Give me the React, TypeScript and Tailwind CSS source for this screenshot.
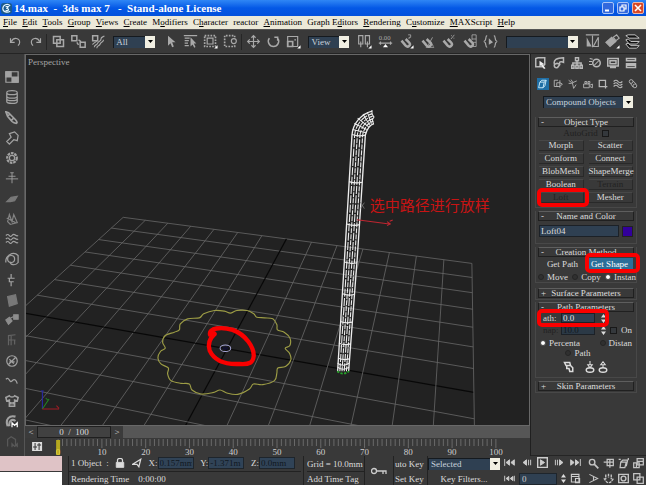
import React from "react";

type IconProps = { children: React.ReactNode; className?: string; vb?: string };

function Icon({ children, className = "size-4", vb = "0 0 16 16" }: IconProps) {
  return (
    <svg viewBox={vb} className={className} fill="none" stroke="currentColor" strokeWidth="1.4" aria-hidden="true">
      {children}
    </svg>
  );
}

function Tool({ label, children, corner }: { label: string; children: React.ReactNode; corner?: boolean }) {
  return (
    <button aria-label={label} className="flex h-5 w-5 shrink-0 items-center justify-center text-[#a9a9a9]">
      <Icon className="size-[15px]" vb="-1 -1 18 18">
        {children}
        {corner && <path d="M16.5 12.5v4h-4z" fill="#fff" stroke="none" />}
      </Icon>
    </button>
  );
}

function Select({ label, value, className }: { label: string; value: string; className: string }) {
  return (
    <span className={"relative flex h-3 shrink-0 " + className}>
      <select
        aria-label={label}
        className="h-full w-full appearance-none border-l border-t border-[#151a1f] bg-[#2f4052] pl-[2px] leading-none text-[#c9d3dc] outline-none"
      >
        <option>{value}</option>
      </select>
      <span className="pointer-events-none absolute inset-y-0 right-0 flex w-[10px] items-center justify-center bg-[#f1efe2]">
        <svg viewBox="0 0 5 3" className="h-[3px] w-[5px]" aria-hidden="true">
          <path d="M0 0h5L2.5 3z" fill="#000" />
        </svg>
      </span>
    </span>
  );
}

const Sep = () => <span className="mx-px h-4 w-px shrink-0 bg-[#262626]" />;

const menus: [string, number][] = [
  ["File", 0], ["Edit", 0], ["Tools", 0], ["Group", 0], ["Views", 0], ["Create", 0], ["Modifiers", 1],
  ["Character", 1], ["reactor", -1], ["Animation", 0], ["Graph Editors", 7], ["Rendering", 0],
  ["Customize", 1], ["MAXScript", 0], ["Help", 0],
];

function TitleBar() {
  return (
    <header className="flex h-4 items-center bg-gradient-to-b from-[#2f86f5] via-[#0458e6] to-[#0351dc] pl-px pr-[2px] text-white">
      <svg viewBox="0 0 12 12" className="size-[11px]" aria-hidden="true">
        <rect width="12" height="12" rx="3" fill="#1b5a8c" />
        <path d="M10 3C7 0 2 2 2 6s5 5 8 3M5 4h3L6.500 6C9 6 9 9 5 8" fill="none" stroke="#e4f4ff" strokeWidth="1.300" />
      </svg>
      <h1 className="ml-[2px] whitespace-pre text-[11px] font-bold leading-4">14.max  -  3ds max 7   -  Stand-alone License</h1>
      <div className="ml-auto flex gap-[3px]">
        <button aria-label="Minimize" className="size-3 rounded-[2px] border border-[#a9c4f7] bg-[#3268dd]">
          <Icon className="size-full" vb="0 0 10 10"><path d="M2 7.500h4" strokeWidth="2" /></Icon>
        </button>
        <button aria-label="Restore" className="size-3 rounded-[2px] border border-[#a9c4f7] bg-[#3268dd]">
          <Icon className="size-full" vb="0 0 10 10"><path d="M4 4V2h4v4H6M2 4h4v4H2z" strokeWidth="1.200" /></Icon>
        </button>
        <button aria-label="Close" className="size-3 rounded-[2px] border border-[#f0b8a8] bg-[#d94826]">
          <Icon className="size-full" vb="0 0 10 10"><path d="M2 2l6 6M8 2L2 8" strokeWidth="1.600" /></Icon>
        </button>
      </div>
    </header>
  );
}

function MenuBar() {
  return (
    <nav className="h-[13px] bg-[#ece9d8] px-[3px] text-black">
      <div className="flex w-4/5 justify-between">
        {menus.map(([m, u]) => (
          <button key={m} className="whitespace-nowrap leading-[13px]">
            {u < 0 ? m : <>{m.slice(0, u)}<u>{m[u]}</u>{m.slice(u + 1)}</>}
          </button>
        ))}
      </div>
    </nav>
  );
}

const magnet = <path d="M2 7l5 6c3 3 7-1 4-4L7 5" strokeWidth="3" />;

function Toolbar() {
  return (
    <div className="flex h-6 items-center justify-between border-t border-[#555] pl-[5px] pr-[3px]">
      <div className="flex items-center">
        <Tool label="Undo"><path d="M2 4v5h5M3 8c3-6 10-4 10 1 0 2-1 3-2 4" /></Tool>
        <Tool label="Redo"><path d="M14 4v5H9M13 8C10 2 3 4 3 9c0 2 1 3 2 4" /></Tool>
        <Sep />
        <Tool label="Select and link"><path d="M2 2h8v8H2zM6 6h8v8H6z" strokeWidth="1.800" /></Tool>
        <Tool label="Unlink selection"><path d="M0 1h6v6H0zM10 9h6v6h-6zM8 6l3 2M6 9l2 3" strokeWidth="1.800" /></Tool>
        <Tool label="Bind to space warp"><path d="M1 1h6v6H1z" strokeWidth="1.800" /><path d="M3 15c0-4 3-2 4-5s4-2 4-5 3-2 4-4M6 16c0-4 3-2 4-5s4-2 4-5M1 12c0-3 4-2 5-5" /></Tool>
      </div>
      <Select label="Selection filter" value="All" className="w-[42px]" />
      <div className="flex items-center">
        <Tool label="Select object"><path d="M5 1v12l3-3 2 5 2-1-2-5h4z" fill="currentColor" stroke="none" /></Tool>
        <Tool label="Select by name"><path d="M0 1h16M1 4h6M1 7h5M1 10h4M1 13h5" /><path d="M8 3v11l2.500-2.500 2 4 1.500-1-2-4H15z" fill="currentColor" stroke="none" /></Tool>
        <Tool label="Selection region" corner><path d="M1 1h13v13H1z" strokeDasharray="2 1.500" strokeWidth="2" /><path d="M4 4h7v7H4z" /></Tool>
        <Tool label="Window crossing"><path d="M13 3V1H1v13h12v-2" strokeDasharray="2 1.500" strokeWidth="2" /><circle cx="12" cy="7.500" r="3" /></Tool>
        <Sep />
        <Tool label="Move"><path d="M8 1v14M1 8h14M5.500 3.500L8 1l2.500 2.500M5.500 12.500L8 15l2.500-2.500M3.500 5.500L1 8l2.500 2.500M12.500 5.500L15 8l-2.500 2.500" /></Tool>
        <Tool label="Rotate"><path d="M3 4c-3 4 0 10 5 10s8-6 5-10M13 7V3h-4" strokeWidth="1.800" /></Tool>
        <Tool label="Scale" corner><path d="M1 2h12v12H1z" /><path d="M1 8h6v6H1z" strokeWidth="2" /><path d="M9 6h2" /></Tool>
      </div>
      <Select label="Reference coordinates" value="View" className="w-[41px]" />
      <div className="flex items-center gap-px">
        <Tool label="Pivot centre" corner><path d="M1 1h5v10H1zM9 1h5v10H9zM3.500 8v7M11.500 8v7" /></Tool>
        <Tool label="Keyboard override"><text x="0" y="6" fontSize="8" fill="currentColor" stroke="none">0.00</text><path d="M0 10h16M2 8v4M14 8v4" /><path d="M8 11l3 4H5z" fill="#fff" stroke="none" /></Tool>
        <Tool label="Snap toggle" corner>{magnet}<path d="M10 0h3v3h-2v2" strokeWidth="1" /></Tool>
        <Tool label="Angle snap">{magnet}<path d="M6 15h10M9 12l5-9M12 8l3 6" strokeWidth="1" /></Tool>
        <Tool label="Percent snap">{magnet}<path d="M11 5l4-5M11 1h1M14 4h1" strokeWidth="1" /></Tool>
        <Tool label="Spinner snap">{magnet}<path d="M11 0h5v14h-4M11 5h5M11 9h5M11 0v6" strokeWidth="1" /></Tool>
        <Tool label="Named selection sets"><path d="M4 1C1 1 4 7 0 8c4 1 1 7 4 7M12 1c3 0 0 6 4 7-4 1-1 7-4 7" /><path d="M6 4v8l5-3z" fill="currentColor" stroke="none" /></Tool>
      </div>
      <Select label="Named selection" value="" className="w-[72px]" />
      <div className="flex items-center">
        <Tool label="Mirror"><path d="M8 1v14M0 0h16" /><path d="M1 3l6 11H1z" fill="currentColor" stroke="none" /><path d="M15 3L9 14h6z" /></Tool>
        <Tool label="Align" corner><path d="M0 9l7-6 5 5-7 6z" fill="currentColor" /><path d="M9 3l4-3 3 4-4 3z" /></Tool>
        <Tool label="Layers"><g stroke="#ddd" fill="#111" strokeWidth="1"><path d="M0 11l3-1 3 3h10l-3 3H4z" /><path d="M0 6l3-1 3 3h10l-3 3H4z" /><path d="M0 1l3-1h8l5 4H4z" /></g></Tool>
      </div>
    </div>
  );
}

const sideIcons: [string, React.ReactNode][] = [
  ["Rigid bodies", <><path d="M1 2h14v12H1z" /><path d="M1 2h6v6H1zM8 8h7v6H8z" fill="currentColor" /></>],
  ["Cloth", <path d="M2 3c0-3 12-3 12 0v10c0 3-12 3-12 0zM2 3c0 3 12 3 12 0M2 7c0 3 12 3 12 0M2 10c0 3 12 3 12 0" />],
  ["Soft bodies", <path d="M1 1l3 1 8 8c2 2 2 4 1 4s-3 0-5-2L3 6zM5 4L3 6M10 8l-3 3" strokeWidth="2" />],
  ["Rope", <path d="M5 3l6-2 4 4-1 6-4-1-5 5-3-3 5-5z" />],
  ["Deforming mesh", <><circle cx="8" cy="8" r="5.500" strokeWidth="2.500" strokeDasharray="3 1" /><circle cx="8" cy="8" r="3" /></>],
  ["Plane", <path d="M8 2v12M1 9h14M4 6h8M6 2h4" strokeWidth="1" />],
  ["Spring", <path d="M2 11l5-5 7-1-3 5-5 1z" fill="currentColor" opacity=".6" />],
  ["Dashpot", <path d="M3 11l2-8 3 8 2-8 4 9-8 2zM2 7l10 5" opacity=".7" />],
  ["Motor", <path d="M1 4c4-4 4 4 7 0s4 2 7 0M1 8c4-4 4 4 7 0s4 2 7 0M1 12c4-4 4 4 7 0s4 2 7 0" />],
  ["Wind", <><circle cx="7" cy="8" r="4" /><path d="M1 12C0 5 9-2 15 4v8c-3 4-9 3-9-1" /></>],
  ["Toy car", <path d="M7 1v5M3 6h8M5 6v4h5M7 10v5" />],
  ["Fracture", <path d="M3 4l9-2 2 10-9 3z" fill="currentColor" opacity=".6" />],
  ["Water", <path d="M1 8l4-3 3 4-4 4zM10 2h5v5h-5zM6 6l4-2" fill="currentColor" opacity=".8" />],
  ["Hinge", <path d="M4 14V3l8-1M4 8h8M7 3v11M11 8v5" opacity=".4" />],
  ["Point-point", <><circle cx="8" cy="8" r="6" /><path d="M4 12l8-8M5 6l5 5M5 9h6" /></>],
  ["Prismatic", <path d="M1 6c4-4 4 5 7 2s5-1 6 3" />],
  ["Cloth modifier", <path d="M1 4l4-2c1 2 5 2 6 0l4 2-1 4-3-1v7H5V7L2 8zM6 9v3M8 9v3M10 9v3" strokeWidth="1.800" />],
  ["Rope modifier", <><path d="M3 14C0 6 5 1 12 3M5 14C4 8 8 5 12 8" strokeWidth="2.400" /><path d="M8 15v-5l3 3 3-3v5" stroke="#fff" /></>],
  ["Analyze world", <path d="M3 13V5l4-3 5 3v8M8 14v-4l3 3 3-3v4" opacity=".3" />],
];

function SideBar() {
  return (
    <aside className="flex w-[25px] shrink-0 flex-col items-center justify-between border-r border-[#555] py-[15px] pb-[6px] text-[#a2a2a2]">
      {sideIcons.map(([n, i]) => (
        <button key={n} aria-label={n} className="flex h-4 w-5 items-center justify-center">
          <Icon className="size-[14px]">{i}</Icon>
        </button>
      ))}
    </aside>
  );
}

/* Projects ground-plane coordinates (14 cells wide, 7 cells deep per unit) into the perspective view. */
const quad = { a: [124, 217], b: [472, 263], c: [474, 391.7], d: [19.6, 311.6] };
function project(col: number, row: number): [number, number] {
  const u = col / 14;
  const v = row / 7;
  const [x0, y0] = quad.a, [x1, y1] = quad.b, [x2, y2] = quad.c, [x3, y3] = quad.d;
  const dx1 = x1 - x2, dx2 = x3 - x2, dx3 = x0 - x1 + x2 - x3;
  const dy1 = y1 - y2, dy2 = y3 - y2, dy3 = y0 - y1 + y2 - y3;
  const det = dx1 * dy2 - dx2 * dy1;
  const g = (dx3 * dy2 - dx2 * dy3) / det;
  const h = (dx1 * dy3 - dx3 * dy1) / det;
  const w = g * u + h * v + 1;
  return [
    ((x1 - x0 + g * x1) * u + (x3 - x0 + h * x3) * v + x0) / w,
    ((y1 - y0 + g * y1) * u + (y3 - y0 + h * y3) * v + y0) / w,
  ];
}

/* Closed Catmull-Rom spline through the given knots. */
function spline(p: number[][]) {
  const n = p.length;
  return `M${p[0]}` + p.map((a, i) => {
    const z = p[(i + n - 1) % n], b = p[(i + 1) % n], c = p[(i + 2) % n];
    return `C${a[0] + (b[0] - z[0]) / 6} ${a[1] + (b[1] - z[1]) / 6} ${b[0] - (c[0] - a[0]) / 6} ${b[1] - (c[1] - a[1]) / 6} ${b[0]} ${b[1]}`;
  }).join("") + "Z";
}

const steps = Array.from({ length: 15 }, (_, i) => i);
const flower = [
  [243, 38], [262, 30], [293, 30], [313, 40], [322, 50], [345, 52], [370, 55], [382, 72], [384, 88], [404, 95],
  [421, 112], [421, 135], [407, 143], [420, 158], [424, 178], [408, 198], [385, 202], [382, 218], [375, 240],
  [340, 252], [312, 250], [300, 265], [265, 281], [232, 277], [212, 268], [190, 276], [155, 280], [128, 268],
  [120, 250], [95, 248], [65, 240], [55, 220], [57, 202], [35, 190], [26, 172], [34, 152], [48, 143], [40, 125],
  [48, 105], [75, 95], [90, 88], [93, 70], [115, 55], [150, 52], [163, 40], [195, 30], [225, 32],
];

function GridLine({ from, to, axis }: { from: [number, number]; to: [number, number]; axis: boolean }) {
  return <line x1={from[0]} y1={from[1]} x2={to[0]} y2={to[1]} stroke={axis ? "#080808" : "#686868"} strokeWidth={axis ? 1.2 : 0.8} />;
}

function Viewport() {
  const rings = [[135, 157, 197], [276, 148, 188], [403, 141, 181], [517, 135, 172], [612, 129, 163], [695, 122, 157], [760, 118, 153], [805, 116, 149]];
  return (
    <div className="border border-[#686868] bg-[#222]">
      <svg viewBox="27 55 502 369" className="block w-full" role="img" aria-label="Perspective viewport">
        {steps.map((i) => (
          <React.Fragment key={i}>
            <GridLine from={project(i, 0)} to={project(i, 11)} axis={i === 7} />
            {i < 12 && <GridLine from={project(0, i)} to={project(14, i)} axis={i === 7} />}
          </React.Fragment>
        ))}
        <text x="29" y="65" fontSize="9" fill="#a5a5a5">Perspective</text>
        <g transform="translate(150 300) scale(.3333)" fill="none">
          <path stroke="#9c9c45" strokeWidth="3.500" d={spline(flower)} />
          <path
            stroke="#f90000"
            strokeWidth="13"
            strokeLinecap="round"
            strokeLinejoin="round"
            d="M196 100L182 103C178 82 215 78 250 88C290 103 313 140 313 165C311 187 300 192 270 190C225 192 195 180 181 150C174 130 183 112 196 100"
          />
          <ellipse cx="228" cy="143" rx="16" ry="10" stroke="#a8a8d8" strokeWidth="3" />
          <ellipse cx="228" cy="143" rx="9" ry="5" fill="#11112e" />
        </g>
        <g transform="translate(26 200) scale(.3333)" fill="none" strokeWidth="3">
          <path d="M52 625v-52M47 571h9" stroke="#2929b0" />
          <path d="M52 625l20-30M62 592l6 6" stroke="#228a22" />
          <path d="M52 625h50M94 615l8 8" stroke="#a01c24" />
        </g>
        <g transform="translate(300 90) scale(.3333)" fill="none" stroke="#ededed">
          {[0, 1, 2, 3, 4, 5].map((i) => (
            <path
              key={i}
              strokeWidth={i === 0 || i === 5 ? 4 : 3.2}
              strokeDasharray={i === 0 || i === 5 ? undefined : i % 2 ? "24 4" : "15 3"}
              d={`M${114 + i * 6.6} 842L${135 + i * 7.6} 500L${157 + i * 8} 135C${160 + i * 8} ${98 + i * 5} ${185 + i * 4} ${72 + i * 7} ${217 + i} ${63 + i * 7.5}`}
            />
          ))}
          {rings.map(([y, l, r]) => (
            <path key={y} strokeWidth="3.500" d={`M${l} ${y - 2}Q${(l + r) / 2} ${y + 5} ${r} ${y}`} />
          ))}
          <path strokeWidth="3" d="M159 118l40 10M164 100l37 18M174 84l33 26M190 72l20 33M203 66l12 35M217 60v12l6 9-5 8 4 14" />
          <path strokeWidth="3" d="M114 830q16 12 34 0M114 818q16 12 34 0" />
          <path stroke="#29a32b" strokeWidth="5" strokeDasharray="7 4" d="M113 842q17 14 35 0" />
          <path stroke="#bf2631" strokeWidth="3" d="M172 388l97 13M262 394l10 7-10 5M270 393l9-4" />
          <path stroke="#777" strokeWidth="2.500" d="M182 335l12 20M194 337l-11 17" />
        </g>
        <text x="370" y="211" fontSize="15" fill="#c81414" className="font-['Noto_Sans_CJK_SC',sans-serif]">选中路径进行放样</text>
      </svg>
    </div>
  );
}

function TimeControls() {
  return (
    <>
      <div className="flex h-3 bg-[#565656]">
        <div className="flex w-[98px] items-stretch bg-[#3b3b3b] text-[#ddd]">
          <button aria-label="Previous frame" className="w-3 leading-3">&lt;</button>
          <span className="flex-1 border border-[#1f1f1f] bg-[#414141] text-center leading-[10px]">0&nbsp; / &nbsp;100</span>
          <button aria-label="Next frame" className="w-3 leading-3">&gt;</button>
        </div>
      </div>
      <svg viewBox="26 436 504 18" className="block w-full" role="img" aria-label="Track bar">
        <path d="M33 440h10v9H33z" fill="#ddd" />
        <path d="M36 441v7M40 441v7M34 445h4M38 443h4" stroke="#333" />
        {Array.from({ length: 101 }, (_, i) => (
          <line key={i} x1={59 + i * 4.37} x2={59 + i * 4.37} y1="437" y2={i % 10 ? 444 : 446} stroke="#6a6a6a" />
        ))}
        <rect x="57" y="438" width="4" height="15" fill="#b5a91f" />
        {Array.from({ length: 11 }, (_, i) => (
          <text key={i} x={59 + i * 43.7} y="453" fontSize="9" textAnchor="middle" fill={i ? "#cfcfcf" : "#edd94a"}>{i * 10}</text>
        ))}
      </svg>
    </>
  );
}

const panelTabs: [string, React.ReactNode][] = [
  ["Create", <><path d="M1 2l3-1h9v9l-3 3H1z" strokeWidth="2" /><path d="M6 5v8l2-2 4 5 2-1-4-5h3z" fill="#eee" stroke="none" /></>],
  ["Modify", <path d="M2 10C0 4 5 1 14 1v6C10 5 8 7 9 10l-3 4c-3 1-5-1-4-4zM2 10c2-2 5-2 7 0" strokeWidth="2" />],
  ["Hierarchy", <path d="M6 1h4v4H6zM1 11h3v4H1zM6.500 11h3v4h-3zM12 11h3v4h-3zM8 5v6M2.500 11V8h11v3" strokeWidth="2" />],
  ["Motion", <><circle cx="10" cy="8" r="5" strokeWidth="2" /><path d="M7 11l6-6M1 2l4 1M0 6h4M0 10h4" /></>],
  ["Display", <path d="M1 2h14v10H1zM4 5h8v4H4zM4 14h8" strokeWidth="2" />],
  ["Utilities", <path d="M2 2h12v3H2zM2 9h12v5H2zM2 11h12" strokeWidth="2" />],
];
const categories: [string, React.ReactNode][] = [
  ["Geometry", <path d="M3 5l3-3h7l-2 9-3 3H1zM3 5h7l3-3M10 5L8 14" stroke="#d6f2ff" />],
  ["Shapes", <path d="M8 2H2v10h6M6 6h5l4 2-4 4H6zM11 2v12" />],
  ["Lights", <path d="M1 2l5 4M5 1l3 5M1 7h5M7 6l7-3M7 6l2 9 4-6" />],
  ["Cameras", <path d="M1 8h9v6H1zM11 10l4-2v6l-4-2M3 4h3v3H3zM8 4h3v3H8z" />],
  ["Helpers", <path d="M2 2h10v10H2zM9 12h6M12 9v6" strokeWidth="2" />],
  ["Space warps", <path d="M1 4q4-4 7 0t7 0M1 8q4-4 7 0t7 0M1 12q4-4 7 0t7 0" strokeWidth="1.800" />],
  ["Systems", <><circle cx="5" cy="4" r="3" /><circle cx="11" cy="11" r="3" /><path d="M4 7l4 6M8 3l5 5" /></>],
];

function Header({ sign, children }: { sign: string; children: React.ReactNode }) {
  return (
    <h2 className="relative mx-[2px] h-[10px] border border-[#202020] border-t-[#5e5e5e] text-center leading-[8px] text-[#dedede]">
      <span className="absolute left-[2px]">{sign}</span>
      {children}
    </h2>
  );
}

function Btn({ children, off }: { children: string; off?: boolean }) {
  return (
    <button className={"h-[11px] border-b border-r border-[#292929] border-t border-t-[#474747] text-center leading-[9px] whitespace-nowrap " + (off ? "text-[#222]" : "text-[#dcdcdc]")}>
      {children}
    </button>
  );
}

function Radio({ name, label, checked }: { name: string; label: string; checked?: boolean }) {
  return (
    <label className="flex items-center gap-[3px] leading-[10px]">
      <input
        type="radio"
        name={name}
        defaultChecked={checked}
        className="size-[6px] appearance-none rounded-full border border-[#252525] bg-[#303030] checked:border-[#444] checked:bg-white"
      />
      {label}
    </label>
  );
}

function Check({ label, dim }: { label: string; dim?: boolean }) {
  return (
    <label className={"flex items-center gap-1 leading-[10px] " + (dim ? "flex-row-reverse text-[#202020]" : "")}>
      <input type="checkbox" className="size-[7px] appearance-none border border-[#181818] bg-[#34383c]" />
      {label}
    </label>
  );
}

const Spinner = () => (
  <svg viewBox="0 0 5 9" className="h-[9px] w-[5px]" aria-hidden="true">
    <path d="M0 3.500h5L2.500 0zM0 5.500h5L2.500 9z" fill="#ddd" />
  </svg>
);

const box = "ml-1 mr-[9px] border border-t-0 border-[#484848]";
const mark = "pointer-events-none absolute rounded-[5px] border-4 border-[#fa0000]";

function CommandPanel() {
  return (
    <aside className="flex w-[116px] shrink-0 flex-col border-l border-[#202020] text-[#dcdcdc]">
      <div className="mt-px flex h-4 items-center gap-[6px] pl-1 text-[#b8b8b8]">
        {panelTabs.map(([n, i]) => (
          <button key={n} aria-label={n} className="w-3"><Icon className="size-3">{i}</Icon></button>
        ))}
      </div>
      <div className="mt-[7px] flex h-3 items-center gap-[3px] pl-[6px] text-[#b8b8b8]">
        {categories.map(([n, i], k) => (
          <button key={n} aria-label={n} className={k ? "size-3 p-px" : "size-3 bg-[#1f6ea5] p-px"}>
            <Icon className="size-full">{i}</Icon>
          </button>
        ))}
      </div>
      <div className="mt-[6px] pl-3"><Select label="Category" value="Compound Objects" className="w-[90px]" /></div>

      <section className={box + " mt-[9px] pb-1"}>
        <Header sign="-">Object Type</Header>
        <div className="flex justify-center py-px"><Check label="AutoGrid" dim /></div>
        <div className="relative mt-px grid grid-cols-2 gap-x-[5px] gap-y-[2px] px-[3px]">
          <Btn>Morph</Btn><Btn>Scatter</Btn>
          <Btn>Conform</Btn><Btn>Connect</Btn>
          <Btn>BlobMesh</Btn><Btn>ShapeMerge</Btn>
          <Btn>Boolean</Btn><Btn off>Terrain</Btn>
          <Btn off>Loft</Btn><Btn>Mesher</Btn>
          <span className={mark + " -bottom-[4px] left-px h-[19px] w-[52px]"} />
        </div>
      </section>

      <section className={box + " mt-[3px] pb-[6px]"}>
        <Header sign="-">Name and Color</Header>
        <div className="mt-1 flex items-center gap-[3px] px-[3px]">
          <input aria-label="Object name" defaultValue="Loft04" className="h-3 min-w-0 flex-1 border border-[#1c2127] bg-[#2f4052] px-px text-[#dcdcdc]" />
          <button aria-label="Object colour" className="size-[11px] border border-[#222] bg-[#32009b]" />
        </div>
      </section>

      <section className={box + " mt-[3px]"}>
        <Header sign="-">Creation Method</Header>
        <div className="relative grid h-[14px] grid-cols-2 items-center px-[3px]">
          <button className="leading-3">Get Path</button>
          <button className="bg-[#2b6e98] leading-3 text-white">Get Shape</button>
          <span className={mark + " -right-[4px] -top-[4px] h-5 w-[55px]"} />
        </div>
        <div className="mt-px flex justify-between whitespace-nowrap pl-[2px]">
          <Radio name="method" label="Move" /><Radio name="method" label="Copy" /><Radio name="method" label="Instan" checked />
        </div>
      </section>

      <section className={box + " mt-[5px] pb-px"}><Header sign="+">Surface Parameters</Header></section>

      <section className={box + " mt-[2px] pb-1"}>
        <Header sign="-">Path Parameters</Header>
        <div className="relative flex h-3 items-center pl-[7px]">
          <label htmlFor="path-value" className="w-[18px]">ath:</label>
          <input id="path-value" defaultValue="0.0" className="mr-[6px] h-[10px] w-[34px] border border-[#1c2127] bg-[#2f4052] px-px text-[#e5e5e5]" />
          <Spinner />
          <span className={mark + " -top-[3px] left-px h-[18px] w-[72px]"} />
        </div>
        <div className="flex h-3 items-center pl-[7px]">
          <label htmlFor="snap-value" className="w-[18px] text-[#222]">nap:</label>
          <input id="snap-value" defaultValue="10.0" disabled className="mr-[6px] h-[10px] w-[34px] border border-[#1c2127] bg-[#2b3946] px-px text-[#12181d]" />
          <Spinner />
          <span className="ml-1"><Check label="On" /></span>
        </div>
        <div className="mt-[2px] flex justify-between px-1"><Radio name="mode" label="Percenta" checked /><Radio name="mode" label="Distan" /></div>
        <div className="flex justify-center pr-4"><Radio name="mode" label="Path" /></div>
        <div className="mt-[3px] flex items-center pl-[27px]">
          <button aria-label="Pick shape" className="mr-[9px] size-3"><Icon className="size-3"><path d="M2 2h7l1 4H4zM5 6h5l3 3v5H9l-1-4H5z" strokeWidth="2" /></Icon></button>
          <button aria-label="Previous shape" className="size-3"><Icon className="size-3"><path d="M8 0v5M5 5h6L8 9z" /><ellipse cx="8" cy="12" rx="5" ry="3" strokeWidth="2" /></Icon></button>
          <button aria-label="Next shape" className="ml-px size-3"><Icon className="size-3"><path d="M8 9V5M5 5h6L8 1z" /><ellipse cx="8" cy="12" rx="5" ry="3" strokeWidth="2" /></Icon></button>
        </div>
      </section>

      <section className={box + " mt-[3px] pb-px"}><Header sign="+">Skin Parameters</Header></section>
      <div className="flex-1 border-b border-[#252525]" />
    </aside>
  );
}

function Coord({ axis, value }: { axis: string; value: string }) {
  return (
    <label className="flex items-center">
      {axis}:
      <input defaultValue={value} className="h-3 w-9 border border-[#1e252c] bg-[#304357] px-px text-[#11181f]" />
    </label>
  );
}

function Ctl({ label, children }: { label: string; children: React.ReactNode }) {
  return <button aria-label={label} className="flex h-[14px] items-center justify-center"><Icon className="size-[11px]">{children}</Icon></button>;
}

function StatusBar() {
  return (
    <footer className="flex h-[31px] border-b border-[#2c72c8] text-[#dcdcdc]">
      <div className="flex w-[62px] shrink-0 flex-col gap-px">
        <input aria-label="Macro recorder" className="h-[15px] w-full bg-[#dfc3c6]" />
        <input aria-label="Script listener" className="h-[14px] w-full bg-white" />
      </div>
      <div className="ml-[6px] w-[233px] shrink-0 border-l border-[#222]">
        <div className="flex h-4 items-center justify-between border-b border-[#222] pl-[2px] pr-[6px]">
          <span>1 Object&nbsp; :</span>
          <button aria-label="Lock selection"><Icon className="size-[10px]"><path d="M4 7V3c0-3 8-3 8 0v4" strokeWidth="2" /><path d="M2 7h12v8H2z" fill="currentColor" /></Icon></button>
          <button aria-label="Absolute mode"><Icon className="size-[10px]"><path d="M1 10l13-8-3 12-3-4z" strokeWidth="2" /></Icon></button>
          <Coord axis="X" value="0.157mm" /><Coord axis="Y" value="-1.371m" /><Coord axis="Z" value="0.0mm" />
        </div>
        <p className="whitespace-pre pl-[2px] leading-[14px]">Rendering Time    0:00:00</p>
      </div>
      <div className="ml-[2px] w-[62px] shrink-0 whitespace-nowrap border-x border-[#222] pl-[3px]">
        <p className="h-4 border-b border-[#222] leading-4">Grid = 10.0mm</p>
        <button className="leading-[14px]">Add Time Tag</button>
      </div>
      <button aria-label="Set keys" className="flex w-7 shrink-0 items-center justify-center">
        <svg viewBox="0 0 16 8" className="w-4" fill="none" stroke="#ccc" strokeWidth="1.300" aria-hidden="true"><circle cx="3" cy="4" r="2.500" /><path d="M5.500 4H15v3M12 4v3" /></svg>
      </button>
      <div className="flex w-[34px] shrink-0 flex-col items-start whitespace-nowrap border-l border-[#222] pl-px">
        <button className="h-4">uto Key</button>
        <button className="h-[14px]">Set Key</button>
      </div>
      <div className="flex w-[73px] shrink-0 flex-col border-l border-[#222] pt-px">
        <Select label="Key selection" value="Selected" className="mt-px w-full" />
        <button className="mt-[2px] h-[14px]">Key Filters...</button>
      </div>
      <div className="ml-1 flex flex-1 flex-col justify-between text-[#ccc]">
        <div className="flex justify-between">
          <Ctl label="Go to start"><path d="M1 3v10M8 4L3 8l5 4zM15 4l-5 4 5 4z" fill="currentColor" /></Ctl>
          <Ctl label="Step back"><path d="M8 4L3 8l5 4zM11 4v8M14 4v8" fill="currentColor" /></Ctl>
          <Ctl label="Play"><path d="M1 1h14v14H1z" strokeWidth="2" /><path d="M5 4l6 4-6 4z" fill="currentColor" /></Ctl>
          <Ctl label="Step forward"><path d="M8 4l5 4-5 4zM2 4v8M5 4v8" fill="currentColor" /></Ctl>
          <Ctl label="Go to end"><path d="M15 3v10M8 4l5 4-5 4zM1 4l5 4-5 4z" fill="currentColor" /></Ctl>
        </div>
        <div className="flex items-center justify-between">
          <Ctl label="Key mode"><path d="M1 4v8M7 5L3 8l4 3zM13 5L9 8l4 3zM15 4v8" fill="currentColor" /></Ctl>
          <input aria-label="Current frame" defaultValue="0" className="h-3 w-[38px] border border-[#1e252c] bg-[#2f4052] px-[2px]" />
          <Spinner />
          <Ctl label="Time configuration"><path d="M2 2h11v11H2zM2 5h11M8 8h6v6H8z" strokeWidth="1.600" /></Ctl>
        </div>
      </div>
      <div className="ml-[5px] grid w-[60px] shrink-0 grid-cols-4 items-center text-[#c4c4c4]">
        <Ctl label="Zoom"><circle cx="6" cy="6" r="4" strokeWidth="2" /><path d="M9 9l6 6" strokeWidth="2.500" /></Ctl>
        <Ctl label="Zoom all"><path d="M6 2h9v9H6zM1 6h9v8M6 6h9M10 2v9" strokeWidth="1.800" /></Ctl>
        <Ctl label="Zoom extents"><path d="M4 6h8l-2 8H3zM4 6l3-3h7l-2 9M1 2h3M15 0v3" strokeWidth="1.800" /></Ctl>
        <Ctl label="Zoom extents all"><path d="M6 1h9v9H6zM1 7h8v7H1zM6 5h9M5 7v7" strokeWidth="1.800" /></Ctl>
        <Ctl label="Field of view"><path d="M2 2l12 6-12 6M8 5v6" strokeWidth="1.600" /></Ctl>
        <Ctl label="Pan"><path d="M4 2v7M8 1v6M12 2v7M1 8c2 0 3 6 7 6s5-3 7-6" strokeWidth="2" strokeDasharray="4 1" /></Ctl>
        <Ctl label="Arc rotate"><path d="M1 2h14v12H1z" strokeWidth="2" /><circle cx="8" cy="8" r="3.500" strokeWidth="2" /></Ctl>
        <Ctl label="Maximize viewport"><path d="M1 1h9v9H1zM6 6h9v9H6z" strokeWidth="1.800" /></Ctl>
      </div>
    </footer>
  );
}

export default function App() {
  return (
    <main className="overflow-hidden bg-[#393939] font-['Liberation_Serif','Noto_Sans_CJK_SC',serif] text-[9px] leading-[12px]">
      <TitleBar />
      <MenuBar />
      <Toolbar />
      <div className="flex border-t border-[#242424]">
        <SideBar />
        <div className="min-w-0 flex-1">
          <Viewport />
          <TimeControls />
        </div>
        <CommandPanel />
      </div>
      <StatusBar />
    </main>
  );
}
